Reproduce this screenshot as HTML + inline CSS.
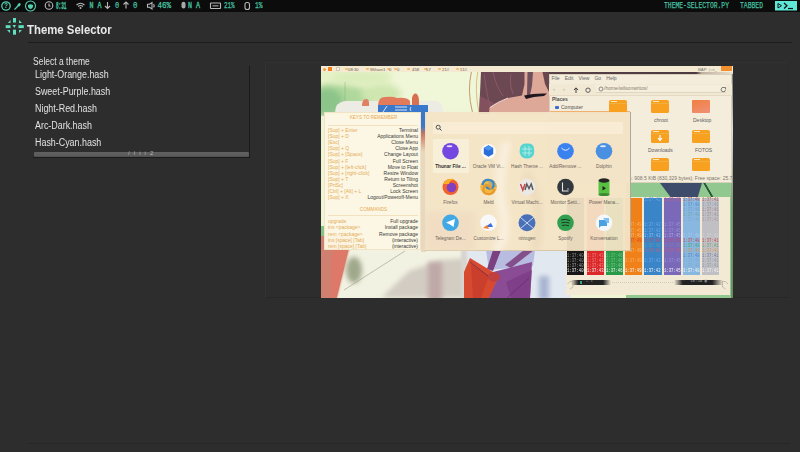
<!DOCTYPE html>
<html><head><meta charset="utf-8">
<style>
*{margin:0;padding:0;box-sizing:border-box}
html,body{width:800px;height:452px;overflow:hidden;background:#2d2d2d;font-family:"Liberation Sans",sans-serif}
.a{position:absolute}
#bar{left:0;top:0;width:800px;height:12px;background:#0c0c0c}
#hline{left:28px;top:42px;width:764px;height:1px;background:#1c1c1c}
#title{left:27px;top:22px;font-size:13px;font-weight:bold;color:#e8e8e8;white-space:nowrap;transform:scaleX(0.875);transform-origin:0 0}
.sm{font-size:10px;color:#e2e2e2;white-space:nowrap;transform-origin:0 0}
#list{left:33px;top:66px;width:217px;height:92px;border-right:1px solid #1a1a1a;border-bottom:1px solid #1a1a1a}
#sb{left:1px;top:86px;width:215px;height:5px;background:linear-gradient(#606060,#5a5a5a 80%,#4c4c4c);border-radius:1px}
#frame{left:265px;top:62px;width:524px;height:236px;border-left:1px solid #333;border-top:1px solid #313131;border-right:1px solid #2a2a2a;border-bottom:1px solid #262626}
#img{left:321px;top:66px;width:412px;height:232px;background:#e8e0c0;overflow:hidden}
#bline{left:28px;top:443px;width:762px;height:1px;background:#262626}
.st{font-family:"Liberation Mono",monospace;font-size:9px;color:#5ecfb0;white-space:nowrap;transform-origin:0 0}
.tx{white-space:nowrap;font-family:"Liberation Sans",sans-serif;line-height:1}
.fo{width:18px;height:13px;background:#f8a020;border-radius:2px 2px 1.5px 1.5px}.fo::before{content:"";position:absolute;left:2px;top:1.2px;width:6px;height:1.2px;background:#fde8c0}.fo::after{content:"";position:absolute;left:0;top:2.6px;width:18px;height:0.8px;background:#f0b040}
.lb{width:43px;text-align:center;font-size:4.7px;color:#6a6258}
.tm{font-family:"Liberation Mono",monospace;font-size:5.2px;line-height:5.1px;white-space:nowrap;transform:scaleX(0.76);transform-origin:0 0}
.tb{top:0.5px;font-size:4.3px;line-height:5px;color:#807060;white-space:nowrap}
.o{color:#f0b060}
</style></head><body>
<div id="bar" class="a">
<svg class="a" style="left:0;top:0" width="800" height="12">
 <g fill="none" stroke="#55d0b0" stroke-width="1.1">
  <circle cx="6" cy="6" r="4.2" stroke-width="1.3"/>
  <circle cx="30.5" cy="6" r="5"/>
 </g>
 <text x="4" y="8.4" font-family="Liberation Sans" font-weight="bold" font-size="6.5" fill="#55d0b0">?</text>
 <path d="M14.5 9.5 L18 6" stroke="#55d0b0" stroke-width="1.2"/><ellipse cx="19" cy="4.8" rx="2" ry="1.3" transform="rotate(-45 19 4.8)" fill="#55d0b0"/>
 <path d="M28 5 Q30.5 3.5 33 5 Q33.5 8 30.5 9 Q27.5 8 28 5 Z" fill="#55d0b0"/>
 <g fill="none" stroke="#b8b8b8" stroke-width="1.1">
  <circle cx="49" cy="5.5" r="3.8"/>
  <path d="M49 3.5 V6 H50.5"/>
  <path d="M76.5 5 Q80.5 1.5 84.5 5 M78 6.5 Q80.5 4.5 83 6.5"/>
  <path d="M107.5 2 V8.5 M105 6 L107.5 8.5 L110 6"/>
  <path d="M126 2 V8.5 M123.5 4.5 L126 2 L128.5 4.5"/>
  <path d="M147.5 4.2 H149.5 L152 2.5 V9 L149.5 7.3 H147.5 Z"/>
  <path d="M153.6 4 Q154.8 5.7 153.6 7.4"/>
  <rect x="210.5" y="3" width="10" height="5.5" rx="0.5"/><path d="M212.5 5.8 H218.5" stroke-width="1.4" stroke="#888"/>
  <rect x="245" y="2.5" width="4.5" height="7" rx="2"/>
 </g>
 <circle cx="80.5" cy="8" r="1" fill="#b8b8b8"/>
 <rect x="181.5" y="1.8" width="4" height="6.8" rx="2" fill="#a8a8a8"/>
 <g font-family="Liberation Mono" font-size="9" stroke="#46c0a0" stroke-width="0.25" fill="#46c0a0">
  <text x="56" y="8.5" textLength="10.5" lengthAdjust="spacingAndGlyphs" font-weight="bold" font-size="10" stroke-width="0.3">8:31</text>
  <text x="89.4" y="8.2" textLength="12" lengthAdjust="spacingAndGlyphs" stroke-width="0.4">N A</text>
  <text x="114.9" y="8.2" textLength="4.2" lengthAdjust="spacingAndGlyphs">0</text>
  <text x="132.9" y="8.2" textLength="4.5" lengthAdjust="spacingAndGlyphs">0</text>
  <text x="157.6" y="8.2" textLength="13.5" lengthAdjust="spacingAndGlyphs" fill="#50d8b4">46%</text>
  <text x="188" y="8.2" textLength="12" lengthAdjust="spacingAndGlyphs" stroke-width="0.4">N A</text>
  <text x="224" y="8.2" textLength="10.5" lengthAdjust="spacingAndGlyphs">21%</text>
  <text x="255" y="8.2" textLength="7.5" lengthAdjust="spacingAndGlyphs">1%</text>
  <text x="664" y="8.2" textLength="65" lengthAdjust="spacingAndGlyphs">THEME-SELECTOR.PY</text>
  <text x="740" y="8.2" textLength="23" lengthAdjust="spacingAndGlyphs">TABBED</text>
 </g>
 <rect x="775" y="1" width="22" height="9.5" fill="#5ee6d6"/>
 <path d="M778 3.5 L781.5 5.7 L778 8 Z" fill="none" stroke="#111" stroke-width="1"/>
 <path d="M784 3 L787 5.7 L784 8.5" fill="none" stroke="#111" stroke-width="1.2"/>
 <path d="M788 8.5 H793" stroke="#111" stroke-width="1.2"/>
</svg>
</div>
<div id="hline" class="a"></div>
<svg class="a" style="left:0;top:12px" width="30" height="30">
 <g fill="#5ee0c0">
  <rect x="13" y="6" width="3" height="4.5"/>
  <rect x="13" y="17.7" width="3" height="5"/>
  <rect x="5.7" y="13.2" width="4.8" height="2.9"/>
  <rect x="18.5" y="13.2" width="5.3" height="2.9"/>
  <path d="M8 11 L10.5 8 L10.5 11 Z"/>
  <path d="M19 8 L22 11 L19 11 Z"/>
  <path d="M7 18 L10 18 L10 21 Z"/>
  <path d="M19 18 L22 18 L19 21 Z"/>
  <path d="M12.5 13 L16 13 L14.3 16 Z"/>
 </g>
</svg>
<div id="title" class="a">Theme Selector</div>
<div class="a sm" style="left:33px;top:56px;transform:scaleX(0.85)">Select a theme</div>
<div id="list" class="a">
<div class="a sm" style="left:2px;top:3px;transform:scaleX(0.89)">Light-Orange.hash</div>
<div class="a sm" style="left:2px;top:20px;transform:scaleX(0.89)">Sweet-Purple.hash</div>
<div class="a sm" style="left:2px;top:37px;transform:scaleX(0.89)">Night-Red.hash</div>
<div class="a sm" style="left:2px;top:54px;transform:scaleX(0.89)">Arc-Dark.hash</div>
<div class="a sm" style="left:2px;top:71px;transform:scaleX(0.89)">Hash-Cyan.hash</div>
<div id="sb" class="a"></div>
<div class="a" style="left:95px;top:84px;font-size:6px;color:rgba(220,220,220,0.75);white-space:nowrap;letter-spacing:1.2px;font-family:'Liberation Sans'">/ l i i 2</div>
</div>
<div id="frame" class="a"></div>
<div id="img" class="a">
<!-- wallpaper -->
<div class="a" style="left:0;top:0;width:412px;height:232px;background:#eef4d4"></div>
<svg class="a" style="left:0;top:0" width="232" height="50" viewBox="0 0 232 50">
 <defs><filter id="b3" x="-50%" y="-50%" width="200%" height="200%"><feGaussianBlur stdDeviation="3"/></filter>
 <filter id="b1" x="-50%" y="-50%" width="200%" height="200%"><feGaussianBlur stdDeviation="0.6"/></filter></defs>
 <rect x="0" y="0" width="232" height="50" fill="#e8f2c8"/>
 <rect x="70" y="0" width="90" height="50" fill="#f0f6d8" filter="url(#b3)"/>
 <ellipse cx="18" cy="34" rx="34" ry="16" fill="#b0d89c" filter="url(#b3)"/>
 <ellipse cx="6" cy="36" rx="16" ry="14" fill="#8cc48a" filter="url(#b3)"/>
 <ellipse cx="60" cy="28" rx="20" ry="10" fill="#cfe6b0" filter="url(#b3)"/>
 <ellipse cx="40" cy="12" rx="30" ry="7" fill="#dcedbc" filter="url(#b3)"/>
 <line x1="24" y1="16" x2="24" y2="47" stroke="#78a878" stroke-width="0.8" opacity="0.5"/>
 <path d="M150.4 6 Q146 25 151.4 46" stroke="#c09060" stroke-width="0.9" fill="none"/>
 <path d="M156.7 6 Q153.5 25 157.8 46" stroke="#d8b070" stroke-width="0.8" fill="none"/>
 <polygon points="160,6 232,6 232,48 158,48" fill="#6c4852"/>
 <polygon points="159,30 175,38 168,48 158,48" fill="#8a5262" opacity="0.8"/>
 <path d="M163 8 Q166 30 170 44 M172 6 Q175 20 182 30 M190 8 Q188 18 192 28" stroke="#85586a" stroke-width="1.1" fill="none"/>
 <polygon points="168,48 168.5,41.5 176,37 186.5,32.2 201,29.5 203.5,18 203.5,6 232,6 232,48" fill="#dea898"/>
 <polygon points="206.5,6 212,6 211,20 209,29 206,29" fill="#70505c"/>
 <polygon points="221.5,6 229,6 231,24 229,28 224,18" fill="#6a4650"/>
 <path d="M169 41.5 Q177 35.5 187 32" stroke="#f4e4e0" stroke-width="0.9" fill="none"/>
 <path d="M203 29.5 Q213 27 226 27.5 L223 30 Q212 30.5 205 33 Z" fill="#201820"/>
 <path d="M14 47 Q14 36 24 35 L115 35 Q122 36 122 47 Z" fill="#ecebe4"/>
 <path d="M41 40 Q41 33 45 33 Q48 33 48 37 L48 40 Z" fill="#e08062" filter="url(#b1)"/>
 <path d="M57 40 Q57 31 64 31 Q72 30 76 32 Q86 31 89 35 L89 40 Z" fill="#e27a5c" filter="url(#b1)"/>
 <path d="M91 40 L91 32 Q92 27 95 27.5 Q98 29 98 35 L98 40 Z" fill="#d87050" filter="url(#b1)"/>
 <rect x="57" y="39" width="50" height="8" fill="#3a78cc"/>
 <path d="M62 46 L66 40 M74 41 H86 M74 44 H86 M90 41 Q88 43 90 45" stroke="#e8f0ff" stroke-width="0.9" fill="none"/>
</svg>
<!-- bottom wallpaper -->
<svg class="a" style="left:0;top:160px" width="250" height="72" viewBox="0 160 250 72">
 <defs><filter id="bl" x="-50%" y="-50%" width="200%" height="200%"><feGaussianBlur stdDeviation="2.5"/></filter>
 <filter id="bl2" x="-50%" y="-50%" width="200%" height="200%"><feGaussianBlur stdDeviation="1"/></filter></defs>
 <rect x="0" y="160" width="250" height="72" fill="#f2f2e2"/>
 <rect x="0" y="160" width="8" height="14" fill="#88c088"/>
 <polygon points="60,232 88,205 120,194 146,192 146,232" fill="#d2ccc2" filter="url(#bl)"/>
 <rect x="107" y="196" width="14" height="40" fill="#c0a8a8" filter="url(#bl)"/>
 <ellipse cx="33" cy="204" rx="8" ry="13" fill="#a0a88c" filter="url(#bl)"/>
 <polygon points="0,170 31,170 15.7,232 0,232" fill="#d08070"/>
 <polygon points="12,170 31,170 15.7,232 10,232" fill="#de7868" filter="url(#bl2)"/>
 <line x1="23" y1="224" x2="84" y2="185" stroke="#9a9a90" stroke-width="0.6"/>
 <rect x="146" y="184" width="104" height="48" fill="#e2e8f0"/>
 <polygon points="168,184 210,184 205,202 175,202" fill="#c4c8e4"/>
 <rect x="218" y="210" width="10" height="24" fill="#a8b4d0" filter="url(#bl)"/>
 <polygon points="140,184 146,184 146,232 140,232" fill="#d8d4d0" filter="url(#bl2)"/>
 <polygon points="165,184 214,184 212,200 168,204" fill="#b8bce0"/>
 <polygon points="172,184 180,184 172,205 166,203" fill="#7a4080"/>
 <polygon points="203,184 213,184 190,202 184,199" fill="#84508c"/>
 <polygon points="149,192 172,206 176,214 170,232 143,232 143,206" fill="#d84a30"/>
 <polygon points="150,198 168,210 160,232 152,232" fill="#c03828" opacity="0.6"/>
 <polygon points="172,206 211,196 209,232 168,232 176,214" fill="#8a4c94"/>
 <polygon points="185,216 211,204 209,232 190,232" fill="#7a3c84" opacity="0.7"/>
 <ellipse cx="173" cy="211" rx="6" ry="5" fill="#c04040"/>
 <line x1="149" y1="196" x2="167" y2="210" stroke="#5a2858" stroke-width="0.7"/>
 <line x1="186" y1="232" x2="208" y2="212" stroke="#5a2a60" stroke-width="0.6"/>
</svg>
<!-- right wallpaper strip between fm and terminal -->
<div class="a" style="left:305px;top:115px;width:107px;height:117px;background:#90c890"></div>
<div class="a" style="left:339px;top:117px;width:42px;height:14px;background:#3e4c6c;clip-path:polygon(0 0,100% 0,90% 100%,25% 100%)"></div>
<div class="a" style="left:380px;top:117px;width:14px;height:14px;background:linear-gradient(60deg,transparent 45%,#2a5a3a 48%,#2a5a3a 55%,transparent 58%)"></div>
<div class="a" style="left:409.6px;top:6px;width:2.4px;height:226px;background:linear-gradient(180deg,#707870 0,#a8b0b0 15%,#d8e0e0 25%,#a0b0a0 45%,#7a9a70 60%,#6a8a60 100%)"></div>
<!-- top bar -->
<div class="a" style="left:0;top:0;width:412px;height:6px;background:#f4ead2"></div>
<!-- file manager -->
<div class="a" style="left:228px;top:6px;width:184px;height:2px;background:linear-gradient(90deg,#5a4048,#4a3a40 80%,#c0b0a0 83%,#e8e0d0)"></div>
<div class="a" style="left:228px;top:8px;width:183px;height:109px;background:#f5eddb;border:1px solid #d8d0bc"></div>
<div class="a tx" style="left:230.5px;top:10px;font-size:5px;color:#686868;word-spacing:1.2px">File&nbsp; Edit&nbsp; View&nbsp; Go&nbsp; Help</div>
<div class="a" style="left:228px;top:18px;width:183px;height:11px;background:#f2e9d4"></div>
<div class="a tx" style="left:232px;top:19.5px;font-size:6px;color:#b0a898">&#8249;</div>
<div class="a tx" style="left:242px;top:19.5px;font-size:6px;color:#b0a898">&#8250;</div>
<svg class="a" style="left:250px;top:19px" width="30" height="10"><path d="M5 8 V3 M3 5 L5 2.8 L7 5" stroke="#404040" stroke-width="1" fill="none"/><circle cx="17" cy="5.2" r="2.2" fill="none" stroke="#505050" stroke-width="0.9"/></svg>
<div class="a" style="left:275px;top:19px;width:130px;height:8px;background:#f6eedc;border-bottom:1px solid #e0d6c0"></div>
<svg class="a" style="left:277px;top:20px" width="6" height="6"><circle cx="3" cy="3" r="2" fill="none" stroke="#707070" stroke-width="0.8"/></svg>
<div class="a tx" style="left:283px;top:20px;font-size:5px;color:#8a8070">/home/wilsonwritos/</div>
<svg class="a" style="left:399px;top:20px" width="7" height="7"><path d="M5.5 3.5 A2.2 2.2 0 1 1 4 1.5 L5.5 1.5 V3" fill="none" stroke="#606060" stroke-width="0.8"/></svg>
<div class="a" style="left:228px;top:29px;width:183px;height:1px;background:#e4dac6"></div>
<div class="a tx" style="left:231px;top:31px;font-size:5px;font-weight:bold;color:#505050">Places</div>
<div class="a" style="left:234px;top:40px;width:4px;height:3px;background:#3a6ad0;border-radius:1px"></div>
<div class="a tx" style="left:240px;top:38.5px;font-size:5px;color:#505050">Computer</div>
<div class="a" style="left:229px;top:45px;width:80px;height:2px;background:#f0b070"></div>
<!-- folders -->
<div class="a fo" style="left:288px;top:34px"></div>
<div class="a fo" style="left:330px;top:34px"></div>
<div class="a" style="left:371px;top:34px;width:18px;height:13px;background:linear-gradient(160deg,#f08040,#f09078);border-radius:1px"></div>
<div class="a tx" style="left:333px;top:52px;font-size:5px;color:#606060">chroot</div>
<div class="a tx" style="left:372px;top:52px;font-size:5px;color:#606060">Desktop</div>
<div class="a fo" style="left:330px;top:64px"></div>
<svg class="a" style="left:335px;top:68px" width="8" height="8"><path d="M4 1 V6 M2 4 L4 6.5 L6 4" stroke="#fff" stroke-width="1.2" fill="none"/></svg>
<div class="a fo" style="left:371px;top:64px"></div>
<div class="a tx" style="left:327px;top:82px;font-size:5px;color:#606060">Downloads</div>
<div class="a tx" style="left:374px;top:82px;font-size:5px;color:#606060">FOTOS</div>
<div class="a fo" style="left:330px;top:92px"></div>
<div class="a fo" style="left:371px;top:92px"></div>
<div class="a tx" style="left:308px;top:110px;font-size:5px;color:#7a7468">s: 908.5 KiB (830,329 bytes), Free space: 25.7 ...</div>
<!-- terminal -->
<div class="a" style="left:245px;top:131px;width:164px;height:98px;background:#f3ead5"></div>
<div class="a" style="left:246.4px;top:131.5px;width:16.5px;height:77px;background:#161616"></div>
<div class="a" style="left:265.5px;top:131.5px;width:17.3px;height:77px;background:#dc2828"></div>
<div class="a" style="left:284.7px;top:131.5px;width:17.5px;height:77px;background:#2a9a48"></div>
<div class="a" style="left:304px;top:131.5px;width:17.3px;height:77px;background:#f08018"></div>
<div class="a" style="left:323.4px;top:131.5px;width:17.3px;height:77px;background:#3a84c8"></div>
<div class="a" style="left:342.5px;top:131.5px;width:17.3px;height:77px;background:#7a68b8"></div>
<div class="a" style="left:361.9px;top:131.5px;width:17.3px;height:77px;background:#88b8e0"></div>
<div class="a" style="left:381px;top:131.5px;width:17.3px;height:77px;background:#c0c0c4"></div>
<div class="a tm" style="left:246.4px;top:132px">&nbsp;<br>&nbsp;<br>&nbsp;<br>&nbsp;<br>&nbsp;<br>&nbsp;<br>&nbsp;<br>&nbsp;<br>&nbsp;<br>&nbsp;<br>&nbsp;<br><span style="color:#909090">1:37:40</span><br><span style="color:#909090">1:37:40</span><br><span style="color:#a0a0a0">1:37:40</span><br><span style="color:#f4f4f4">1:37:40</span></div>
<div class="a tm" style="left:265.5px;top:132px">&nbsp;<br>&nbsp;<br>&nbsp;<br>&nbsp;<br>&nbsp;<br>&nbsp;<br>&nbsp;<br>&nbsp;<br>&nbsp;<br>&nbsp;<br>&nbsp;<br><span style="color:#f08080">1:37:43</span><br><span style="color:#f08080">1:37:43</span><br><span style="color:#f09090">1:37:43</span><br><span style="color:#f4f4f4">1:37:43</span></div>
<div class="a tm" style="left:284.7px;top:132px">&nbsp;<br>&nbsp;<br>&nbsp;<br>&nbsp;<br>&nbsp;<br>&nbsp;<br>&nbsp;<br>&nbsp;<br>&nbsp;<br>&nbsp;<br>&nbsp;<br><span style="color:#70c080">1:37:46</span><br><span style="color:#70c080">1:37:46</span><br><span style="color:#80c890">1:37:46</span><br><span style="color:#f4f4f4">1:37:46</span></div>
<div class="a tm" style="left:304.0px;top:132px">&nbsp;<br>&nbsp;<br>&nbsp;<br>&nbsp;<br>&nbsp;<br><span style="color:#f8b060">1:37:49</span><br><span style="color:#f8b060">1:37:49</span><br><span style="color:#f8c080">1:37:49</span><br><span style="color:#d84830">1:37:49</span><br><span style="color:#d89040">1:37:49</span><br><span style="color:#f8b868">1:37:49</span><br>&nbsp;<br><span style="color:#f8b060">1:37:49</span><br>&nbsp;<br><span style="color:#f4f4f4">1:37:49</span></div>
<div class="a tm" style="left:323.4px;top:132px"><span style="color:#6aa0e0">1:37:42</span><br>&nbsp;<br>&nbsp;<br>&nbsp;<br>&nbsp;<br><span style="color:#70a8e8">1:37:42</span><br><span style="color:#70a8e8">1:37:42</span><br><span style="color:#90c0f0">1:37:42</span><br><span style="color:#c85060">1:37:42</span><br><span style="color:#60a0a0">1:37:42</span><br><span style="color:#c86070">1:37:42</span><br>&nbsp;<br><span style="color:#70a8e8">1:37:42</span><br>&nbsp;<br><span style="color:#f4f4f4">1:37:42</span></div>
<div class="a tm" style="left:342.5px;top:132px"><span style="color:#c06080">1:37:45</span><br>&nbsp;<br>&nbsp;<br>&nbsp;<br>&nbsp;<br><span style="color:#9a90d8">1:37:45</span><br><span style="color:#9a90d8">1:37:45</span><br><span style="color:#b0a8e8">1:37:45</span><br><span style="color:#c05070">1:37:45</span><br><span style="color:#8080b0">1:37:45</span><br><span style="color:#c06080">1:37:45</span><br>&nbsp;<br><span style="color:#9a90d8">1:37:45</span><br>&nbsp;<br><span style="color:#f4f4f4">1:37:45</span></div>
<div class="a tm" style="left:361.9px;top:132px"><span style="color:#c05050">1:37:48</span><br><span style="color:#5a88c0">1:37:48</span><br><span style="color:#7098c8">1:37:48</span><br><span style="color:#70a0b0">1:37:48</span><br><span style="color:#80a8d0">1:37:48</span><br>&nbsp;<br>&nbsp;<br><span style="color:#a8c8f0">1:37:48</span><br><span style="color:#c84848">1:37:48</span><br><span style="color:#50a070">1:37:48</span><br><span style="color:#d09050">1:37:48</span><br><span style="color:#5a80c0">1:37:48</span><br><span style="color:#80a8d8">1:37:48</span><br><span style="color:#80a8d8">1:37:48</span><br><span style="color:#f4f4f4">1:37:48</span></div>
<div class="a tm" style="left:381.0px;top:132px"><span style="color:#b06060">1:37:41</span><br><span style="color:#8898b0">1:37:41</span><br><span style="color:#a08090">1:37:41</span><br><span style="color:#a09098">1:37:41</span><br><span style="color:#a898a0">1:37:41</span><br>&nbsp;<br>&nbsp;<br><span style="color:#d0d0d4">1:37:41</span><br><span style="color:#c05050">1:37:41</span><br><span style="color:#70a070">1:37:41</span><br><span style="color:#d09858">1:37:41</span><br><span style="color:#7080a0">1:37:41</span><br><span style="color:#9098a8">1:37:41</span><br><span style="color:#9098a8">1:37:41</span><br><span style="color:#f4f4f4">1:37:41</span></div>
<div class="a" style="left:250px;top:213.5px;width:40px;height:5px;background:linear-gradient(90deg,rgba(30,30,30,0),#222 18%,#222 80%,rgba(30,30,30,0))"></div><div class="a" style="left:259px;top:214.5px;width:2px;height:3px;background:#30a080"></div><div class="a tm" style="left:265px;top:213px;color:#a0a0a0;transform:none;font-size:4px">&#8962; &#9656;</div>
<div class="a" style="left:352.5px;top:213.5px;width:49px;height:5px;background:linear-gradient(90deg,rgba(30,30,30,0),#222 18%,#222 78%,rgba(30,30,30,0))"></div><div class="a tm" style="left:362px;top:213px;color:#a8a8a8;transform:none;font-size:4px;font-weight:normal">&#183;&nbsp; 18:29 &#9635;</div>
<div class="a" style="left:291px;top:216px;width:61px;height:0;border-top:1px dotted #d0c8b8"></div>
<svg class="a" style="left:245px;top:212px" width="164" height="14"><path d="M1.5 6 L4 3.5 H7 V9 L4 11" fill="none" stroke="#b0a898" stroke-width="0.7"/><path d="M162 6 L159.5 3.5 H156.5 V9 L159.5 11" fill="none" stroke="#b0a898" stroke-width="0.7"/></svg>
<!-- launcher tint over terminal -->
<!-- keys panel -->
<div class="a" style="left:3px;top:46px;width:97px;height:138px;background:rgba(252,247,228,0.97);border:1px solid #f0e4c4"></div>
<div class="a tx" style="left:3px;top:50.2px;left:4px;width:97px;text-align:center;font-size:4.6px;color:#e8a850">KEYS TO REMEMBER</div>
<div class="a" style="left:7px;top:59px;width:90px;height:1px;background:#f2e2c0"></div>
<div class="a tx" style="left:7px;top:61.3px;font-size:5px;line-height:6.04px;color:#e4ac58">[Sup] + Enter<br>[Sup] + D<br>[Esc]<br>[Sup] + Q<br>[Sup] + [Space]<br>[Sup] + F<br>[Sup] + [left-click]<br>[Sup] + [right-click]<br>[Sup] + T<br>[PrtSc]<br>[Ctrl] + [Alt] + L<br>[Sup] + X</div>
<div class="a tx" style="left:19px;top:61.3px;width:78px;text-align:right;font-size:5px;line-height:6.04px;color:#383838">Terminal<br>Applications Menu<br>Close Menu<br>Close App<br>Change Layout<br>Full Screen<br>Move to Float<br>Resize Window<br>Return to Tiling<br>Screenshot<br>Lock Screen<br>Logout/Poweroff-Menu</div>
<div class="a tx" style="left:3px;top:141.5px;left:4px;width:97px;text-align:center;font-size:4.6px;color:#e8a850">COMMANDS</div>
<div class="a" style="left:7px;top:149px;width:90px;height:1px;background:#f2e2c0"></div>
<div class="a tx" style="left:7px;top:152.4px;font-size:5px;line-height:6.1px;color:#e4ac58">upgrade<br>ins &lt;package&gt;<br>rem &lt;package&gt;<br>ins [space] [Tab]<br>rem [space] [Tab]</div>
<div class="a tx" style="left:19px;top:152.4px;width:78px;text-align:right;font-size:5px;line-height:6.1px;color:#383838">Full upgrade<br>Install package<br>Remove package<br>(interactive)<br>(interactive)</div>
<!-- launcher -->
<div class="a" style="left:100px;top:46px;width:5px;height:140px;background:linear-gradient(#3a78cc 0,#3a78cc 14px,#c87868 22px,#e8d8c0 40px)"></div>
<div class="a" style="left:104px;top:46px;width:206px;height:139px;background:rgba(243,228,198,0.95);border-right:1px solid #b0a898;border-bottom:1px solid #d8c8a8"></div>
<svg class="a" style="left:104px;top:46px" width="206" height="139"><defs><filter id="b5" x="-50%" y="-50%" width="200%" height="200%"><feGaussianBlur stdDeviation="3"/></filter></defs>
 <path d="M82 30 Q70 70 78 100 Q84 125 70 139" stroke="#fbf3e4" stroke-width="9" fill="none" filter="url(#b5)" opacity="0.8"/>
 <path d="M100 60 Q120 90 110 139" stroke="#e8d4b4" stroke-width="8" fill="none" filter="url(#b5)" opacity="0.6"/>
 <rect x="0" y="100" width="50" height="39" fill="#eed8c0" filter="url(#b5)" opacity="0.6"/>
</svg>
<div class="a" style="left:111.5px;top:55.5px;width:190px;height:12.5px;background:#f8ecd4;border-radius:1px"></div>
<svg class="a" style="left:114px;top:58px" width="8" height="8"><circle cx="3.2" cy="3.2" r="2" fill="none" stroke="#404040" stroke-width="0.9"/><path d="M4.7 4.7 L6.5 6.5" stroke="#404040" stroke-width="1"/></svg>
<div class="a" style="left:111.5px;top:73px;width:36.5px;height:34px;background:#f8efd8"></div>
<svg class="a" style="left:104px;top:46px" width="205" height="139">
 <g>
  <circle cx="25.5" cy="39.2" r="8.3" fill="#7448e0"/>
  <ellipse cx="24.5" cy="34.2" rx="3" ry="1" fill="#e8e0ff"/>
  <circle cx="63.5" cy="39.5" r="7.5" fill="#fbfaf8"/>
  <path d="M58.8 36 L63.5 33.3 L68.2 36 L68.2 42 L63.5 44.8 L58.8 42 Z" fill="#2a6ed8"/><path d="M58.8 36 L63.5 38.7 L68.2 36 L63.5 33.3 Z" fill="#4a90f0"/>
  <path d="M95 36 Q96 31 102 31.5 Q109 31 109 37 Q110 42 107 45 Q102 48 97 45 Q93.5 41 95 36 Z" fill="#58d4d0"/>
  <path d="M97 37 H107 M97 41 H107 M100 34 V44 M104 34 V44" stroke="#c8f4f0" stroke-width="0.7"/>
  <circle cx="140.5" cy="39.2" r="8.3" fill="#3a82f0"/>
  <path d="M136.5 36 Q140.5 40.5 144.5 36" stroke="#fff" stroke-width="0.9" fill="none"/>
  <circle cx="179" cy="39.2" r="8.3" fill="#4a90e2"/>
  <ellipse cx="178" cy="34.2" rx="3" ry="1" fill="#e0ecff"/>
 </g>
 <g>
  <circle cx="25.5" cy="75" r="8" fill="#f06030"/>
  <circle cx="26.5" cy="75.5" r="4.8" fill="#8040c0"/>
  <path d="M18 72 Q22 66 29 67 Q24 69 24 72 Z" fill="#ffb020"/>
  <circle cx="63.5" cy="75" r="8.3" fill="#f4b840"/>
  <path d="M63.5 66.7 A8.3 8.3 0 0 1 71.8 75 L63.5 75 Z" fill="#5a9ad0" opacity="0.35"/>
  <path d="M57.5 73 Q58.5 67.5 64 68 Q69.5 68.5 68.5 74 Q67.5 77.5 63.5 76.5 Q60.5 75.5 61.5 72.5" stroke="#3a88c8" stroke-width="2.2" fill="none"/>
  <path d="M69.5 77 Q68.5 82.5 63 82 Q57.5 81.5 58.5 76 Q59.5 72.5 63.5 73.5 Q66.5 74.5 65.5 77.5" stroke="#e89a30" stroke-width="2.2" fill="none"/>
  <circle cx="102" cy="75" r="8.3" fill="#ebe9e6"/>
  <path d="M95.5 72 L97.8 78 L100 72" stroke="#c84848" stroke-width="1.5" fill="none"/>
  <path d="M100 78 L101.8 72 L104 76.5 L106.2 72 L108 78" stroke="#5a5a60" stroke-width="1.5" fill="none"/>
  <circle cx="140.5" cy="75" r="8.3" fill="#33373e"/>
  <path d="M137.5 70.5 V79 H143.5" stroke="#e8e8e8" stroke-width="1.1" fill="none"/>
  <circle cx="143" cy="77" r="0.7" fill="#e8e8e8"/>
  <rect x="173.5" y="68" width="11" height="15" rx="1.5" fill="#58c040"/>
  <ellipse cx="179" cy="68.5" rx="5.5" ry="2.2" fill="#252525"/>
  <ellipse cx="179" cy="82.5" rx="5.5" ry="1.6" fill="#3a8a30"/>
  <path d="M177.5 74 L181 76.2 L177.5 78.4 Z" fill="#202020"/>
 </g>
 <g>
  <circle cx="25.5" cy="110.8" r="8.3" fill="#40a8e4"/>
  <path d="M21 110.5 L30 107 L28.5 115 L25 112.5 Z" fill="#fff"/>
  <circle cx="63.5" cy="110.8" r="8.3" fill="#f8f8f8"/>
  <path d="M60 115 L66 111 L68 115 Z" fill="#3a70e0"/>
  <path d="M58 116 L62 113 L64 117 Z" fill="#f08030"/>
  <circle cx="102" cy="110.8" r="8.5" fill="#4a70b8"/>
  <path d="M95 105 L109 117 M109 105 L95 117" stroke="#c8d8f0" stroke-width="1"/>
  <circle cx="140.5" cy="110.8" r="8.3" fill="#30a050"/>
  <path d="M136 108 Q140.5 106.5 145 108.5 M136.5 110.8 Q140.5 109.5 144.5 111 M137 113.5 Q140.5 112.5 144 113.7" stroke="#1a3a20" stroke-width="1" fill="none"/>
  <circle cx="179" cy="110.8" r="8.3" fill="#f4f8fc"/>
  <path d="M174 108 H182 V114 H176 L174 116 Z" fill="#4aa0e0"/>
  <path d="M178 106 H184 V111 H182" fill="#80c0f0"/>
 </g>
</svg>
<div class="a tx lb" style="left:108px;top:99.2px;font-weight:bold;color:#303030">Thunar File ...</div>
<div class="a tx lb" style="left:146px;top:99.2px">Oracle VM Vi...</div>
<div class="a tx lb" style="left:184.5px;top:99.2px">Hash Theme ...</div>
<div class="a tx lb" style="left:223px;top:99.2px">Add/Remove ...</div>
<div class="a tx lb" style="left:261.5px;top:99.2px">Dolphin</div>
<div class="a tx lb" style="left:108px;top:135.2px">Firefox</div>
<div class="a tx lb" style="left:146px;top:135.2px">Meld</div>
<div class="a tx lb" style="left:184.5px;top:135.2px">Virtual Machi...</div>
<div class="a tx lb" style="left:223px;top:135.2px">Monitor Setti...</div>
<div class="a tx lb" style="left:261.5px;top:135.2px">Power Mana...</div>
<div class="a tx lb" style="left:108px;top:171.3px">Telegram De...</div>
<div class="a tx lb" style="left:146px;top:171.3px">Customize L...</div>
<div class="a tx lb" style="left:184.5px;top:171.3px">nitrogen</div>
<div class="a tx lb" style="left:223px;top:171.3px">Spotify</div>
<div class="a tx lb" style="left:261.5px;top:171.3px">Konversation</div>
<!-- image top bar -->
<div class="a" style="left:0;top:0;width:412px;height:5.5px;background:#f4ead2"></div>
<div class="a" style="left:2px;top:1.5px;width:3px;height:3px;background:#f0a040;border-radius:50%"></div>
<div class="a" style="left:7px;top:0.5px;width:4px;height:4.5px;background:#f08020"></div>
<div class="a" style="left:15px;top:1px;width:4px;height:4px;background:#f8f4e8;border:0.5px solid #d0c8b0"></div>
<div class="a" style="left:24px;top:1.6px;width:3px;height:2.8px;border-radius:1px;background:#f4b868"></div><div class="a" style="left:45px;top:1.6px;width:3px;height:2.8px;border-radius:1px;background:#f4b868"></div><div class="a" style="left:66px;top:1.6px;width:3px;height:2.8px;border-radius:1px;background:#f4b868"></div><div class="a" style="left:73px;top:1.6px;width:3px;height:2.8px;border-radius:1px;background:#f4b868"></div><div class="a" style="left:86px;top:1.6px;width:3px;height:2.8px;border-radius:1px;background:#f4b868"></div><div class="a" style="left:103px;top:1.6px;width:3px;height:2.8px;border-radius:1px;background:#f4b868"></div><div class="a" style="left:117px;top:1.6px;width:3px;height:2.8px;border-radius:1px;background:#f4b868"></div><div class="a" style="left:135px;top:1.6px;width:3px;height:2.8px;border-radius:1px;background:#f4b868"></div><div class="a tb" style="left:27px;color:#6a5a4a">08:30</div><div class="a tb" style="left:49px;color:#6a5a4a">Wilson1</div><div class="a tb" style="left:68px;color:#6a5a4a">0</div><div class="a tb" style="left:76px;color:#6a5a4a">0</div><div class="a tb" style="left:91px;color:#6a5a4a">458</div><div class="a tb" style="left:105px;color:#6a5a4a">57</div><div class="a tb" style="left:121px;color:#6a5a4a">21#</div><div class="a tb" style="left:139px;color:#6a5a4a">51#</div>
<div class="a tb" style="left:377px;color:#707070">BAP &nbsp;&#9655;&gt;_</div>
<div class="a" style="left:400px;top:0.3px;width:11px;height:5px;background:#f09030"></div>
</div>
<div id="bline" class="a"></div>
</body></html>
